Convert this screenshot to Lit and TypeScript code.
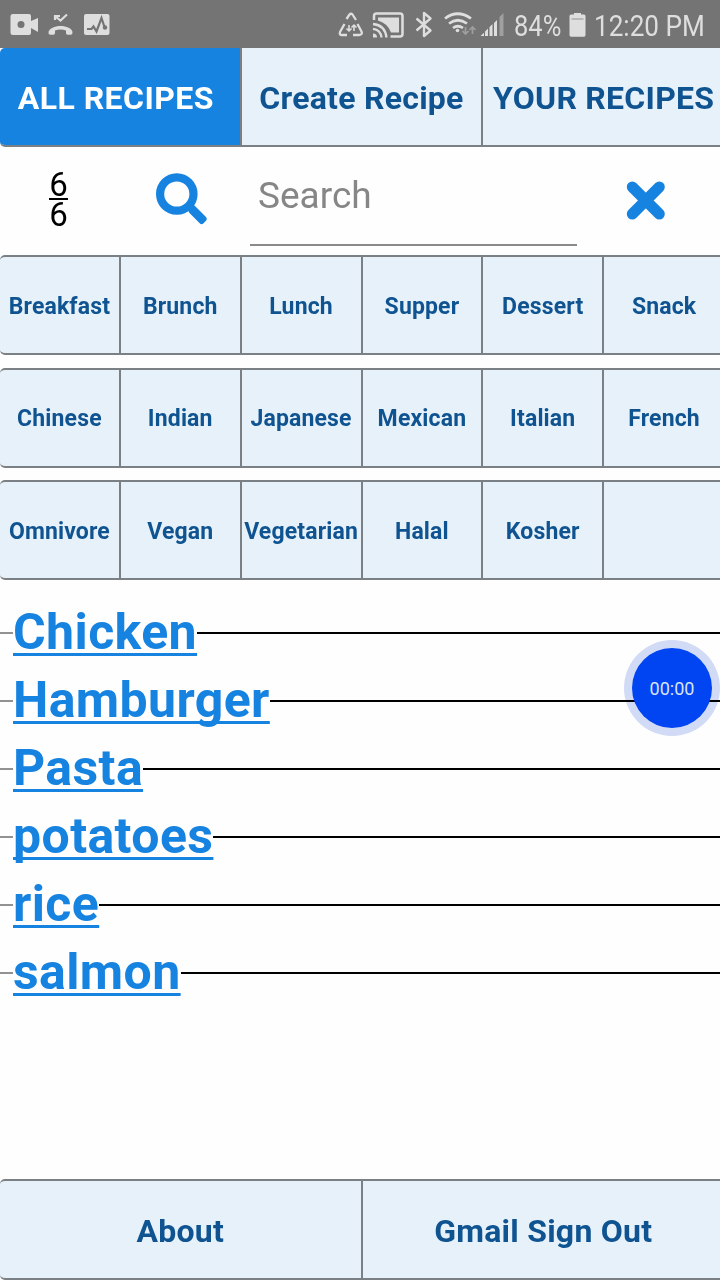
import { LitElement, html, css } from "lit";
import { customElement, property } from "lit/decorators.js";
import { classMap } from "lit/directives/class-map.js";

@customElement("status-bar")
class StatusBar extends LitElement {
  static styles = css`
    :host { display: flex; align-items: center; height: 48px; background: #747474; color: #dedede; padding-left: 10px; padding-right: 15px; box-sizing: border-box; font-size: 30px; line-height: 48px; }
    svg { display: block; flex: none; fill: #dedede; }
    .spacer { flex: 1; }
    .text { flex: none; padding-top: 3px; white-space: nowrap; transform-origin: 0 50%; }
    .battery-text { width: 55px; margin-left: 9px; transform: scaleX(0.85); }
    .clock { width: 111px; margin-left: 8px; transform: scaleX(0.87); }
    .line { fill: none; stroke: #dedede; }
    .dark { fill: #747474; }
    .darkline { fill: none; stroke: #747474; }
  `;
  render() {
    return html`
      <svg width="102" height="48" viewBox="10 0 102 48">
        <path d="M13 14h16q2 0 2 2v5l7-3v14l-7-4v5q0 2-2 2H13q-2.500 0-2.500-2V16q0-2 2.500-2z" />
        <circle class="dark" cx="21" cy="24.500" r="3.500" />
        <path class="line" stroke-width="2.200" d="M55 20v-4h5M55.500 16.500l5 4 6.500-6" />
        <path d="M48.500 32c1-3.500 6-6 12-6s11.500 2.500 12 6q.2 2.700-1.500 2.700h-3.500q-1.500 0-1.500-1.700v-2.500q-5.500-1.800-11 0V33q0 1.700-1.500 1.700H50q-1.800 0-1.500-2.700z" />
        <rect x="84" y="14" width="25.500" height="21" rx="2" />
        <path class="darkline" stroke-width="2.200" d="M87 29h4.500l2-2.500 3 5L101.500 18l3 9" />
        <circle class="dark" cx="105" cy="27.500" r="2.200" />
      </svg>
      <span class="spacer"></span>
      <svg width="167" height="48" viewBox="338 0 167 48">
        <g class="line" stroke-width="2.300" stroke-linejoin="round">
          <path d="M346.500 19l3-4.500q1.500-1.500 3 0l3.500 5.500M344.500 24l-4.500 8q-1 3 2 3h5M353 35h6q4-.5 2.500-3.500l-4-7.500" />
          <path stroke-width="1.600" d="M349 25v6m-2.500-2.500L349 31l2.500-2.500M354 31v-6m-2.500 2.500L354 25l2.500 2.500" />
        </g>
        <path class="line" stroke-width="2.500" d="M374 20v-4q0-2.500 2.500-2.500H400q2.500 0 2.500 2.500v18q0 2.500-2.500 2.500h-9.500" />
        <path d="M378 17.500h21v15h-8q-3-9-13-12z" />
        <path d="M373 33.500q4 0 4 4h-4z" />
        <path class="line" stroke-width="2.300" d="M373 28.800q7.700 1 8.500 8.700M373 24q12 1 13.500 13.500" />
        <path class="line" stroke-width="2.400" stroke-linejoin="round" d="M416.500 18.500l14 12-6.500 5.500V13l6.500 5.500-14 12" />
        <path class="line" stroke-width="2.700" d="M445 18.500q12.500-9.500 26 0M449 23.500q8.800-6.500 18 0M453 28q4.800-3.500 10 0" />
        <circle cx="457.500" cy="30.500" r="1.800" />
        <path class="line" opacity=".4" stroke-width="1.700" d="M465.500 27v7m-3-3l3 3 3-3M472.500 34v-7m-3 3l3-3 3 3" />
        <path d="M480.500 36l3.500-3.300V36zM485 31.500l3-3V36h-3zM489.500 27l3-3v12h-3zM494 23l3-3v16h-3z" />
        <path opacity=".42" d="M499.500 17l4-4v23h-4z" />
      </svg>
      <span class="text battery-text">84%</span>
      <svg width="17" height="48" viewBox="569 0 17 48">
        <path d="M571 14.500h3V13h7v1.500h3q1.500 0 1.500 1.500v19q0 1.700-1.500 1.700h-13q-1.500 0-1.500-1.700V16q0-1.500 1.500-1.500z" />
        <path class="darkline" opacity=".6" stroke-width="1.200" d="M571.500 19h12" />
      </svg>
      <span class="text clock">12:20 PM</span>`;
  }
}

@customElement("button-group")
class ButtonGroup extends LitElement {
  @property({ attribute: false }) labels: string[] = [];
  @property({ type: Number }) active = -1;
  @property({ type: Boolean, reflect: true }) small = false;
  static styles = css`
    :host { display: block; height: 100px; box-sizing: border-box; border: 2px solid #7b8085; border-left: 0; border-right: 0; border-radius: 5px 0 0 5px; overflow: hidden; background: #e7f1fa; color: #0f5491; font-size: 32px; letter-spacing: 0.25px; font-weight: 700; }
    :host([small]) { font-size: 23px; letter-spacing: 0.15px; }
    .cells { display: grid; grid-auto-flow: column; grid-auto-columns: minmax(0, 1fr); width: 725px; height: 100%; }
    .cell { min-width: 0; display: flex; align-items: center; justify-content: center; white-space: nowrap; box-sizing: border-box; border-right: 2px solid #7b8085; padding-top: 2px; }
    .cell:last-child { border-right: 0; padding-right: 1px; }
    .active { background: #1683e0; color: #fff; padding-right: 8px; letter-spacing: 0.45px; }
  `;
  render() {
    return html`<div class="cells">${this.labels.map((l, i) => html`<div class=${classMap({ cell: true, active: i === this.active })}>${l}</div>`)}</div>`;
  }
}

@customElement("search-row")
class SearchRow extends LitElement {
  static styles = css`
    :host { display: grid; grid-template-columns: 117px 133px 327px 1fr; height: 108px; }
    .fraction { display: flex; flex-direction: column; align-items: center; padding-top: 21px; font-size: 33px; color: #000; }
    .num { border-bottom: 2px solid #000; height: 30px; line-height: 33px; }
    .den { line-height: 30px; }
    .field { height: 99px; box-sizing: border-box; border-bottom: 2px solid #8a8a8a; padding: 24px 8px 0; font-size: 37px; line-height: 49px; color: #868686; }
    svg { display: block; }
    .stroke { fill: none; stroke: #1683e0; }
    .fill { fill: #1683e0; }
  `;
  render() {
    return html`
      <div class="fraction"><span class="num">6</span><span class="den">6</span></div>
      <svg width="133" height="108" viewBox="117 147 133 108">
        <circle class="stroke" cx="176.800" cy="194" r="16.700" stroke-width="8.200" />
        <path class="fill" d="M187.500 204.500l4-1 3.500 2.500L206 217q1.800 2 0 3.800l-2.500 2.500q-1.900 1.700-3.800 0L189.500 213q-1.300-1.500-1-3.500z" />
      </svg>
      <div class="field">Search</div>
      <svg width="143" height="108" viewBox="577 147 143 108">
        <path class="stroke" stroke-width="11" stroke-linecap="round" d="M632.300 187l27 27M659.300 187l-27 27" />
      </svg>`;
  }
}

@customElement("app-root")
class AppRoot extends LitElement {
  static styles = css`
    :host { display: flex; flex-direction: column; position: relative; width: 720px; height: 1280px; overflow: hidden; background: #fefefe; font-family: Roboto, "Liberation Sans", sans-serif; }
    .tabs { height: 99px; border-top: 0; flex: none; }
    .filters { display: flex; flex-direction: column; gap: 12.5px; }
    .list { flex: 1; padding-top: 19px; }
    .recipe { display: flex; align-items: center; height: 68px; }
    .lead { width: 13px; height: 2px; background: #929292; }
    .rule { flex: 1; height: 2px; background: #000; }
    .name { font-size: 50px; line-height: 66px; padding-bottom: 2px; letter-spacing: 0.4px; font-weight: 700; color: #1683e0; text-decoration: underline; text-decoration-thickness: 3px; text-decoration-skip-ink: none; text-underline-offset: 4px; }
    .footer { flex: none; height: 101px; }
    .halo { position: absolute; left: 624px; top: 640px; width: 96px; height: 96px; border-radius: 50%; background: #d2dcf6; mix-blend-mode: multiply; }
    .timer { position: absolute; left: 632px; top: 648px; width: 80px; height: 80px; background: #0044f2; border-radius: 50%; display: flex; align-items: center; justify-content: center; color: #d9e4f4; font-size: 18px; }
  `;
  render() {
    return html`
      <status-bar></status-bar>
      <button-group class="tabs" .labels=${["ALL RECIPES", "Create Recipe", "YOUR RECIPES"]} .active=${0}></button-group>
      <search-row></search-row>
      <div class="filters">
        <button-group small .labels=${["Breakfast", "Brunch", "Lunch", "Supper", "Dessert", "Snack"]}></button-group>
        <button-group small .labels=${["Chinese", "Indian", "Japanese", "Mexican", "Italian", "French"]}></button-group>
        <button-group small .labels=${["Omnivore", "Vegan", "Vegetarian", "Halal", "Kosher", ""]}></button-group>
      </div>
      <div class="list">
        ${["Chicken", "Hamburger", "Pasta", "potatoes", "rice", "salmon"].map(
          (n) => html`<div class="recipe"><span class="lead"></span><span class="name">${n}</span><span class="rule"></span></div>`
        )}
      </div>
      <button-group class="footer" .labels=${["About", "Gmail Sign Out"]}></button-group>
      <div class="halo"></div>
      <div class="timer">00:00</div>`;
  }
}
